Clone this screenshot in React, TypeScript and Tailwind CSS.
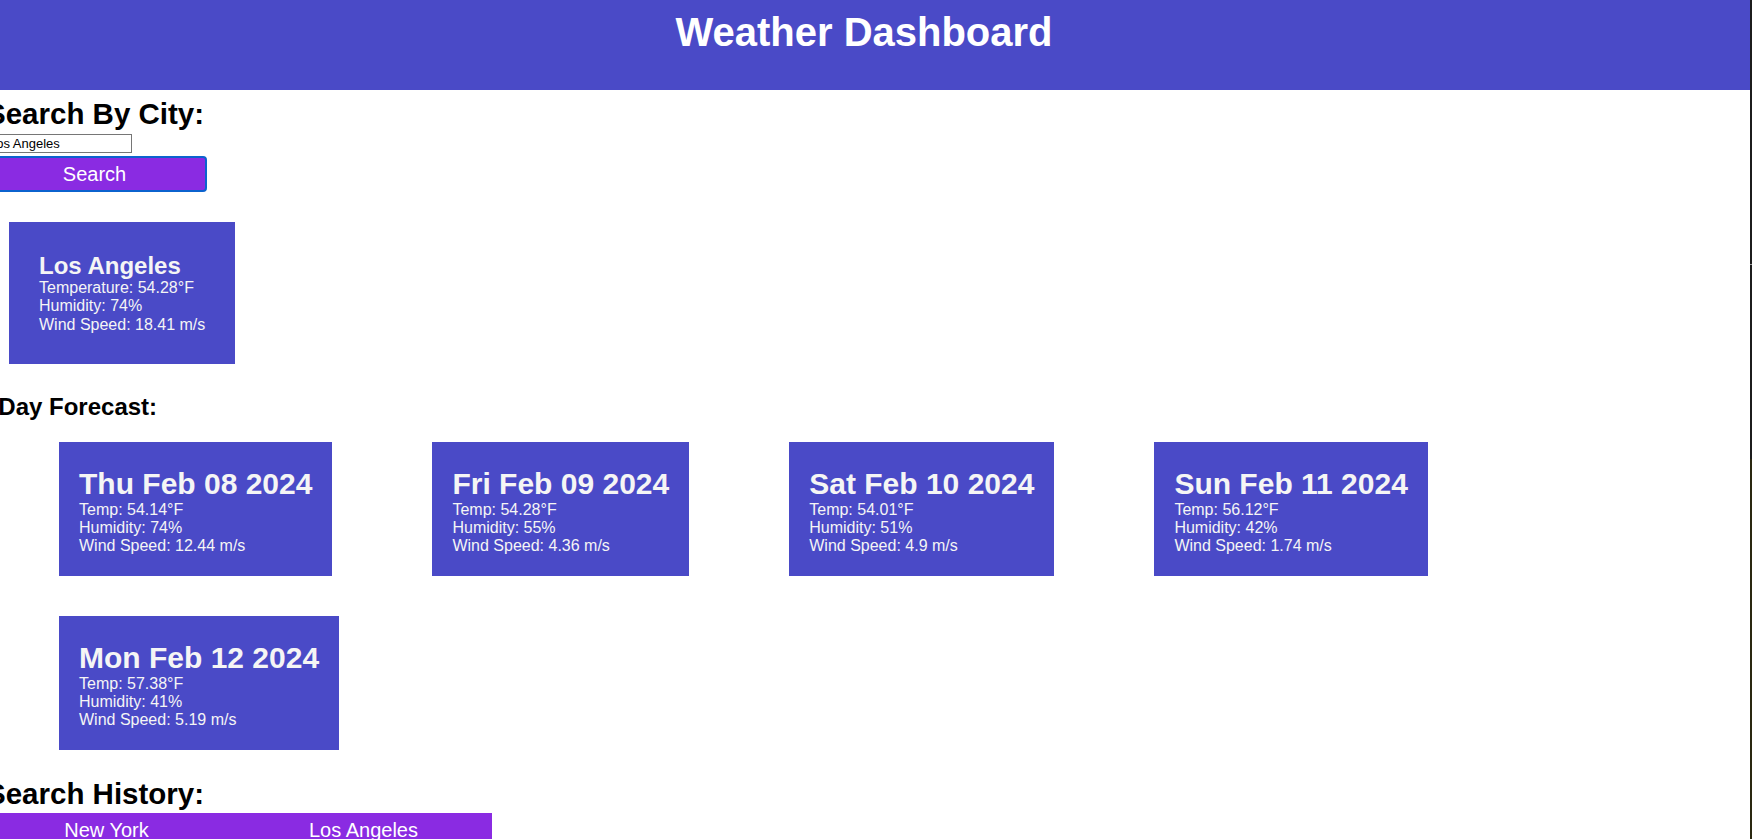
import React from 'react';

type Day = {
  date: string;
  temp: string;
  humidity: string;
  wind: string;
};

const forecast: Day[] = [
  { date: 'Thu Feb 08 2024', temp: '54.14', humidity: '74', wind: '12.44' },
  { date: 'Fri Feb 09 2024', temp: '54.28', humidity: '55', wind: '4.36' },
  { date: 'Sat Feb 10 2024', temp: '54.01', humidity: '51', wind: '4.9' },
  { date: 'Sun Feb 11 2024', temp: '56.12', humidity: '42', wind: '1.74' },
  { date: 'Mon Feb 12 2024', temp: '57.38', humidity: '41', wind: '5.19' },
];

const history = ['New York', 'Los Angeles'];

const ForecastCard: React.FC<{ day: Day }> = ({ day }) => (
  <div className="mx-[50px] my-5 bg-[#4a4ac7] px-5 pt-[25px] pb-[21px] text-[#f5f5f5]">
    <h3 className="whitespace-nowrap text-[30px] font-bold leading-[34px]">{day.date}</h3>
    <p className="text-base leading-[18px]">Temp: {day.temp}°F</p>
    <p className="text-base leading-[18px]">Humidity: {day.humidity}%</p>
    <p className="text-base leading-[18px]">Wind Speed: {day.wind} m/s</p>
  </div>
);

const App: React.FC = () => {
  return (
    <div className="flex h-[839px] w-[1752px] overflow-hidden bg-white font-['Liberation_Sans',Arial,sans-serif] text-black">
      <div className="h-full w-[1750px] overflow-hidden">
        {/* page is scrolled 22px to the right */}
        <div className="-ml-[22px] w-[1772px]">
          <header className="h-[90px] bg-[#4a4ac7] pt-[9px] text-center">
            <h1 className="text-[40px] font-bold leading-[46px] text-white">Weather Dashboard</h1>
          </header>

          <main className="px-2">
            <h2 className="mt-[7px] whitespace-nowrap text-[29.5px] font-bold leading-[33px]">Search By City:</h2>
            <input
              type="text"
              defaultValue="Los Angeles"
              className="mt-1 block h-[19px] w-[146px] border border-[#767676] px-[2px] text-[13px] leading-[17px] text-black outline-none"
            />
            <button className="mt-[3px] block h-9 w-[221px] rounded-[4px] border-2 border-[#0b63ce] bg-[#8a2be2] pr-1 text-[20px] leading-[23px] text-white">
              Search
            </button>

            <div className="ml-[23px]">
              <div className="mt-[30px] inline-block bg-[#4a4ac7] p-[30px] text-[#f5f5f5]">
                <h2 className="text-2xl font-bold leading-[27px]">Los Angeles</h2>
                <p className="text-base leading-[18.4px]">Temperature: 54.28°F</p>
                <p className="text-base leading-[18.4px]">Humidity: 74%</p>
                <p className="text-base leading-[18.4px]">Wind Speed: 18.41 m/s</p>
              </div>
            </div>

            <h3 className="-ml-[9px] mt-[29px] whitespace-nowrap text-[24px] font-bold leading-[27px]">5-Day Forecast:</h3>
            <div className="ml-[23px] mt-[2px] flex w-[1720px] flex-wrap">
              {forecast.map((d) => (
                <ForecastCard key={d.date} day={d} />
              ))}
            </div>

            <h2 className="mt-[7px] whitespace-nowrap text-[29.5px] font-bold leading-[33px]">Search History:</h2>
            <div className="mt-[3px] -ml-2 grid w-[514px] grid-cols-2 bg-[#8a2be2]">
              {history.map((city) => (
                <button key={city} className="py-[6px] text-center text-[20px] leading-[23px] text-white">
                  {city}
                </button>
              ))}
            </div>
          </main>
        </div>
      </div>
      <div className="flex h-full w-[2px] flex-col bg-[#1c1c1c]">
        <div className="mt-[264px] h-px bg-[#9a9a9a]" />
        <div className="mt-auto h-[380px] bg-[#2a2810]" />
      </div>
    </div>
  );
};

export default App;
